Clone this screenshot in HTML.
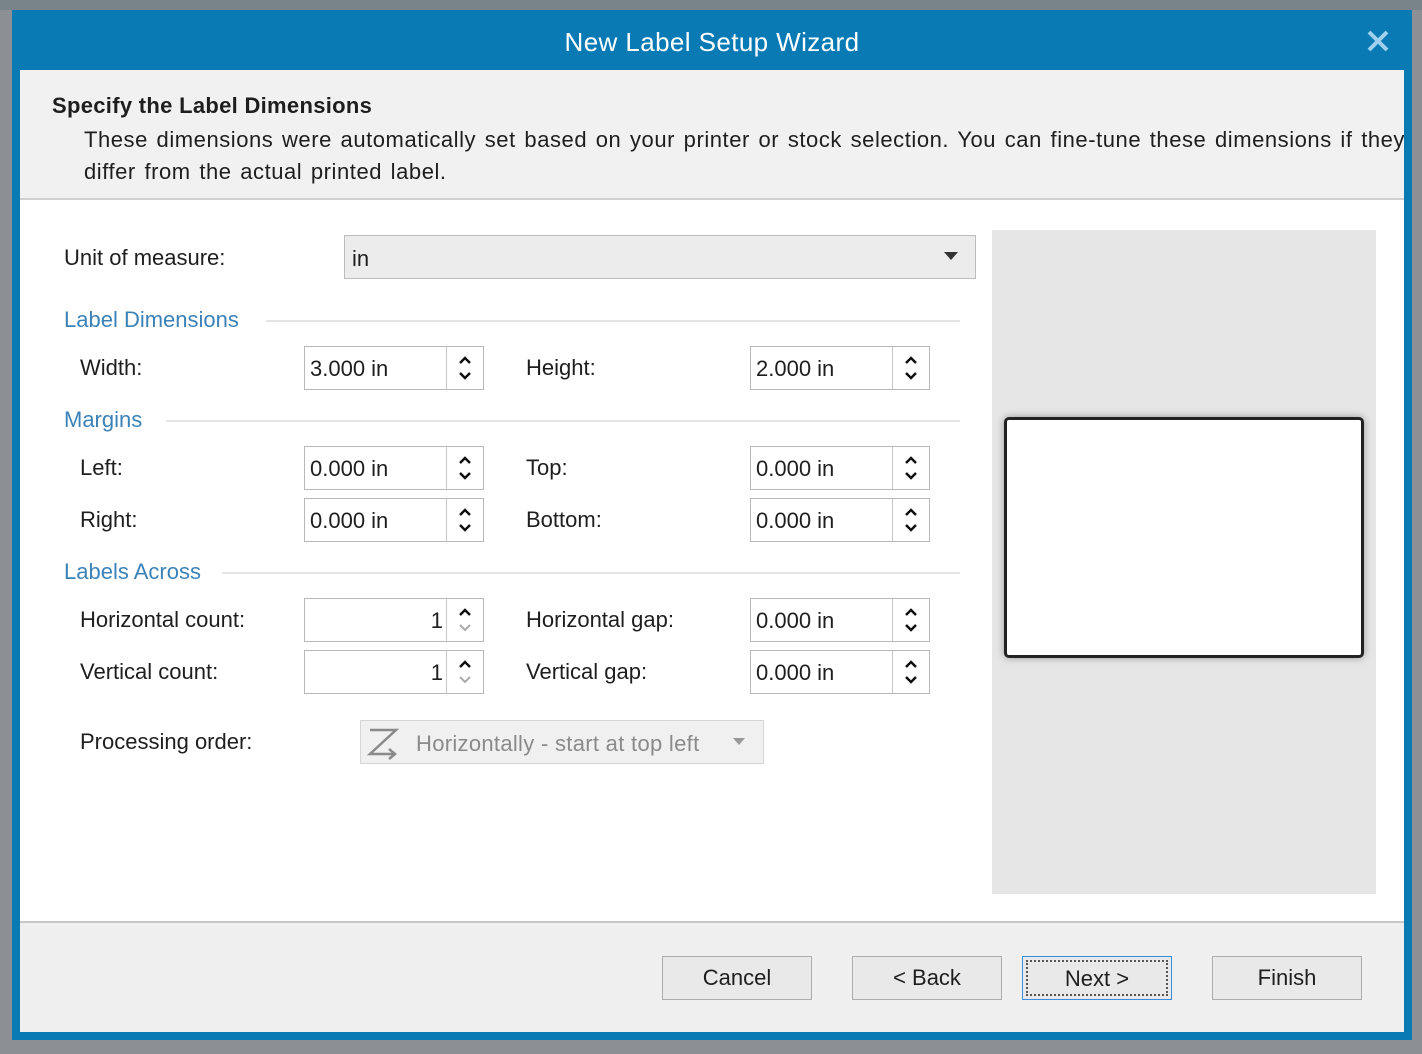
<!DOCTYPE html>
<html><head><meta charset="utf-8"><style>
*{margin:0;padding:0;box-sizing:border-box}
body{width:1422px;height:1054px;overflow:hidden;background:#8c9094;font-family:"Liberation Sans",sans-serif;position:relative;color:#1e1e1e}
.a{position:absolute}
.t{position:absolute;font-size:22px;white-space:nowrap;line-height:24px}
.sec{color:#3b82b8}
.line{position:absolute;height:2px;background:#e4e4e4}
.spin{position:absolute;width:180px;height:44px;border:1px solid #b8b8b8;background:#fff}
.spin .v{position:absolute;left:5px;top:9px;font-size:22px}
.spin .v.r{left:auto;right:40px}
.spin .b{position:absolute;right:0;top:0;width:37px;height:42px;border-left:1px solid #c8c8c8}
.btn{position:absolute;top:956px;width:150px;height:44px;border:1px solid #adadad;background:#e9e9e9;font-size:22px;text-align:center;line-height:42px}
</style></head><body>
<div class="a" style="left:0;top:0;width:1422px;height:10px;background:#78848a"></div>
<div class="a" style="left:12px;top:10px;width:1400px;height:1030px;background:#0a7ab4"></div>
<div class="t" style="left:12px;width:1400px;top:28px;text-align:center;color:#fff;font-size:26px;line-height:28px;letter-spacing:0.4px">New Label Setup Wizard</div>
<svg class="a" style="left:1366px;top:29px" width="24" height="24" viewBox="0 0 24 24"><path d="M3 3L21 21M21 3L3 21" stroke="#9fd0ee" stroke-width="4"/></svg>
<div class="a" style="left:20px;top:70px;width:1384px;height:962px;background:#fff"></div>
<div class="a" style="left:20px;top:70px;width:1384px;height:130px;background:#f1f1f1;border-bottom:2px solid #d0d0d0;overflow:hidden">
<div class="t" style="left:32px;top:24px;font-weight:bold;font-size:22px;letter-spacing:0.3px">Specify the Label Dimensions</div>
<div class="t" style="left:64px;top:58px;font-size:22px;letter-spacing:0.55px;word-spacing:2px">These dimensions were automatically set based on your printer or stock selection. You can fine-tune these dimensions if they</div>
<div class="t" style="left:64px;top:90px;letter-spacing:0.55px;word-spacing:2px">differ from the actual printed label.</div>
</div>

<div class="t" style="left:64px;top:246px">Unit of measure:</div>
<div class="a" style="left:344px;top:235px;width:632px;height:44px;background:#ececec;border:1px solid #bcbcbc"></div>
<div class="t" style="left:352px;top:247px">in</div>
<svg class="a" style="left:944px;top:252px" width="14" height="9"><path d="M0 0H14L7 8Z" fill="#333"/></svg>

<div class="t sec" style="left:64px;top:308px">Label Dimensions</div><div class="line" style="left:266px;top:320px;width:694px"></div>
<div class="t" style="left:80px;top:356px">Width:</div>
<div class="t" style="left:526px;top:356px">Height:</div>
<div class="t sec" style="left:64px;top:408px">Margins</div><div class="line" style="left:166px;top:420px;width:794px"></div>
<div class="t" style="left:80px;top:456px">Left:</div>
<div class="t" style="left:526px;top:456px">Top:</div>
<div class="t" style="left:80px;top:508px">Right:</div>
<div class="t" style="left:526px;top:508px">Bottom:</div>
<div class="t sec" style="left:64px;top:560px">Labels Across</div><div class="line" style="left:222px;top:572px;width:738px"></div>
<div class="t" style="left:80px;top:608px">Horizontal count:</div>
<div class="t" style="left:526px;top:608px">Horizontal gap:</div>
<div class="t" style="left:80px;top:660px">Vertical count:</div>
<div class="t" style="left:526px;top:660px">Vertical gap:</div>

<div class="spin" style="left:304px;top:346px"><div class="v">3.000 in</div><div class="b"><svg width="37" height="42"><path d="M13 16L18 11L23 16M13 26L18 31L23 26" stroke="#111" stroke-width="2.5" fill="none"/></svg></div></div>
<div class="spin" style="left:750px;top:346px"><div class="v">2.000 in</div><div class="b"><svg width="37" height="42"><path d="M13 16L18 11L23 16M13 26L18 31L23 26" stroke="#111" stroke-width="2.5" fill="none"/></svg></div></div>
<div class="spin" style="left:304px;top:446px"><div class="v">0.000 in</div><div class="b"><svg width="37" height="42"><path d="M13 16L18 11L23 16M13 26L18 31L23 26" stroke="#111" stroke-width="2.5" fill="none"/></svg></div></div>
<div class="spin" style="left:750px;top:446px"><div class="v">0.000 in</div><div class="b"><svg width="37" height="42"><path d="M13 16L18 11L23 16M13 26L18 31L23 26" stroke="#111" stroke-width="2.5" fill="none"/></svg></div></div>
<div class="spin" style="left:304px;top:498px"><div class="v">0.000 in</div><div class="b"><svg width="37" height="42"><path d="M13 16L18 11L23 16M13 26L18 31L23 26" stroke="#111" stroke-width="2.5" fill="none"/></svg></div></div>
<div class="spin" style="left:750px;top:498px"><div class="v">0.000 in</div><div class="b"><svg width="37" height="42"><path d="M13 16L18 11L23 16M13 26L18 31L23 26" stroke="#111" stroke-width="2.5" fill="none"/></svg></div></div>
<div class="spin" style="left:304px;top:598px"><div class="v r">1</div><div class="b"><svg width="37" height="42"><path d="M13 16L18 11L23 16" stroke="#111" stroke-width="2.5" fill="none"/><path d="M13 26L18 31L23 26" stroke="#aaa" stroke-width="2" fill="none"/></svg></div></div>
<div class="spin" style="left:750px;top:598px"><div class="v">0.000 in</div><div class="b"><svg width="37" height="42"><path d="M13 16L18 11L23 16M13 26L18 31L23 26" stroke="#111" stroke-width="2.5" fill="none"/></svg></div></div>
<div class="spin" style="left:304px;top:650px"><div class="v r">1</div><div class="b"><svg width="37" height="42"><path d="M13 16L18 11L23 16" stroke="#111" stroke-width="2.5" fill="none"/><path d="M13 26L18 31L23 26" stroke="#aaa" stroke-width="2" fill="none"/></svg></div></div>
<div class="spin" style="left:750px;top:650px"><div class="v">0.000 in</div><div class="b"><svg width="37" height="42"><path d="M13 16L18 11L23 16M13 26L18 31L23 26" stroke="#111" stroke-width="2.5" fill="none"/></svg></div></div>

<div class="t" style="left:80px;top:730px">Processing order:</div>
<div class="a" style="left:360px;top:720px;width:404px;height:44px;background:#f0f0f0;border:1px solid #d6d6d6"></div>
<svg class="a" style="left:366px;top:726px" width="36" height="34"><path d="M4 4H30L4 28H28M23 23L29 28L23 33" stroke="#8a8a8a" stroke-width="2.5" fill="none"/></svg>
<div class="t" style="left:416px;top:732px;color:#8a8a8a;letter-spacing:0.3px">Horizontally - start at top left</div>
<svg class="a" style="left:733px;top:738px" width="12" height="8"><path d="M0 0H12L6 7Z" fill="#999"/></svg>

<div class="a" style="left:992px;top:230px;width:384px;height:664px;background:#e6e6e6"></div>
<div class="a" style="left:1004px;top:417px;width:360px;height:241px;background:#fff;border:3px solid #222;border-radius:5px;box-shadow:0 0 8px rgba(0,0,0,.35)"></div>

<div class="a" style="left:20px;top:921px;width:1384px;height:111px;background:#efefef;border-top:2px solid #c8c8c8"></div>
<div class="btn" style="left:662px">Cancel</div>
<div class="btn" style="left:852px">&lt; Back</div>
<div class="btn" style="left:1022px;border:1px solid #3a8ee0"><div style="position:absolute;left:3px;top:3px;right:3px;bottom:3px;border:2px dotted #555;line-height:34px">Next &gt;</div></div>
<div class="btn" style="left:1212px">Finish</div>
</body></html>
